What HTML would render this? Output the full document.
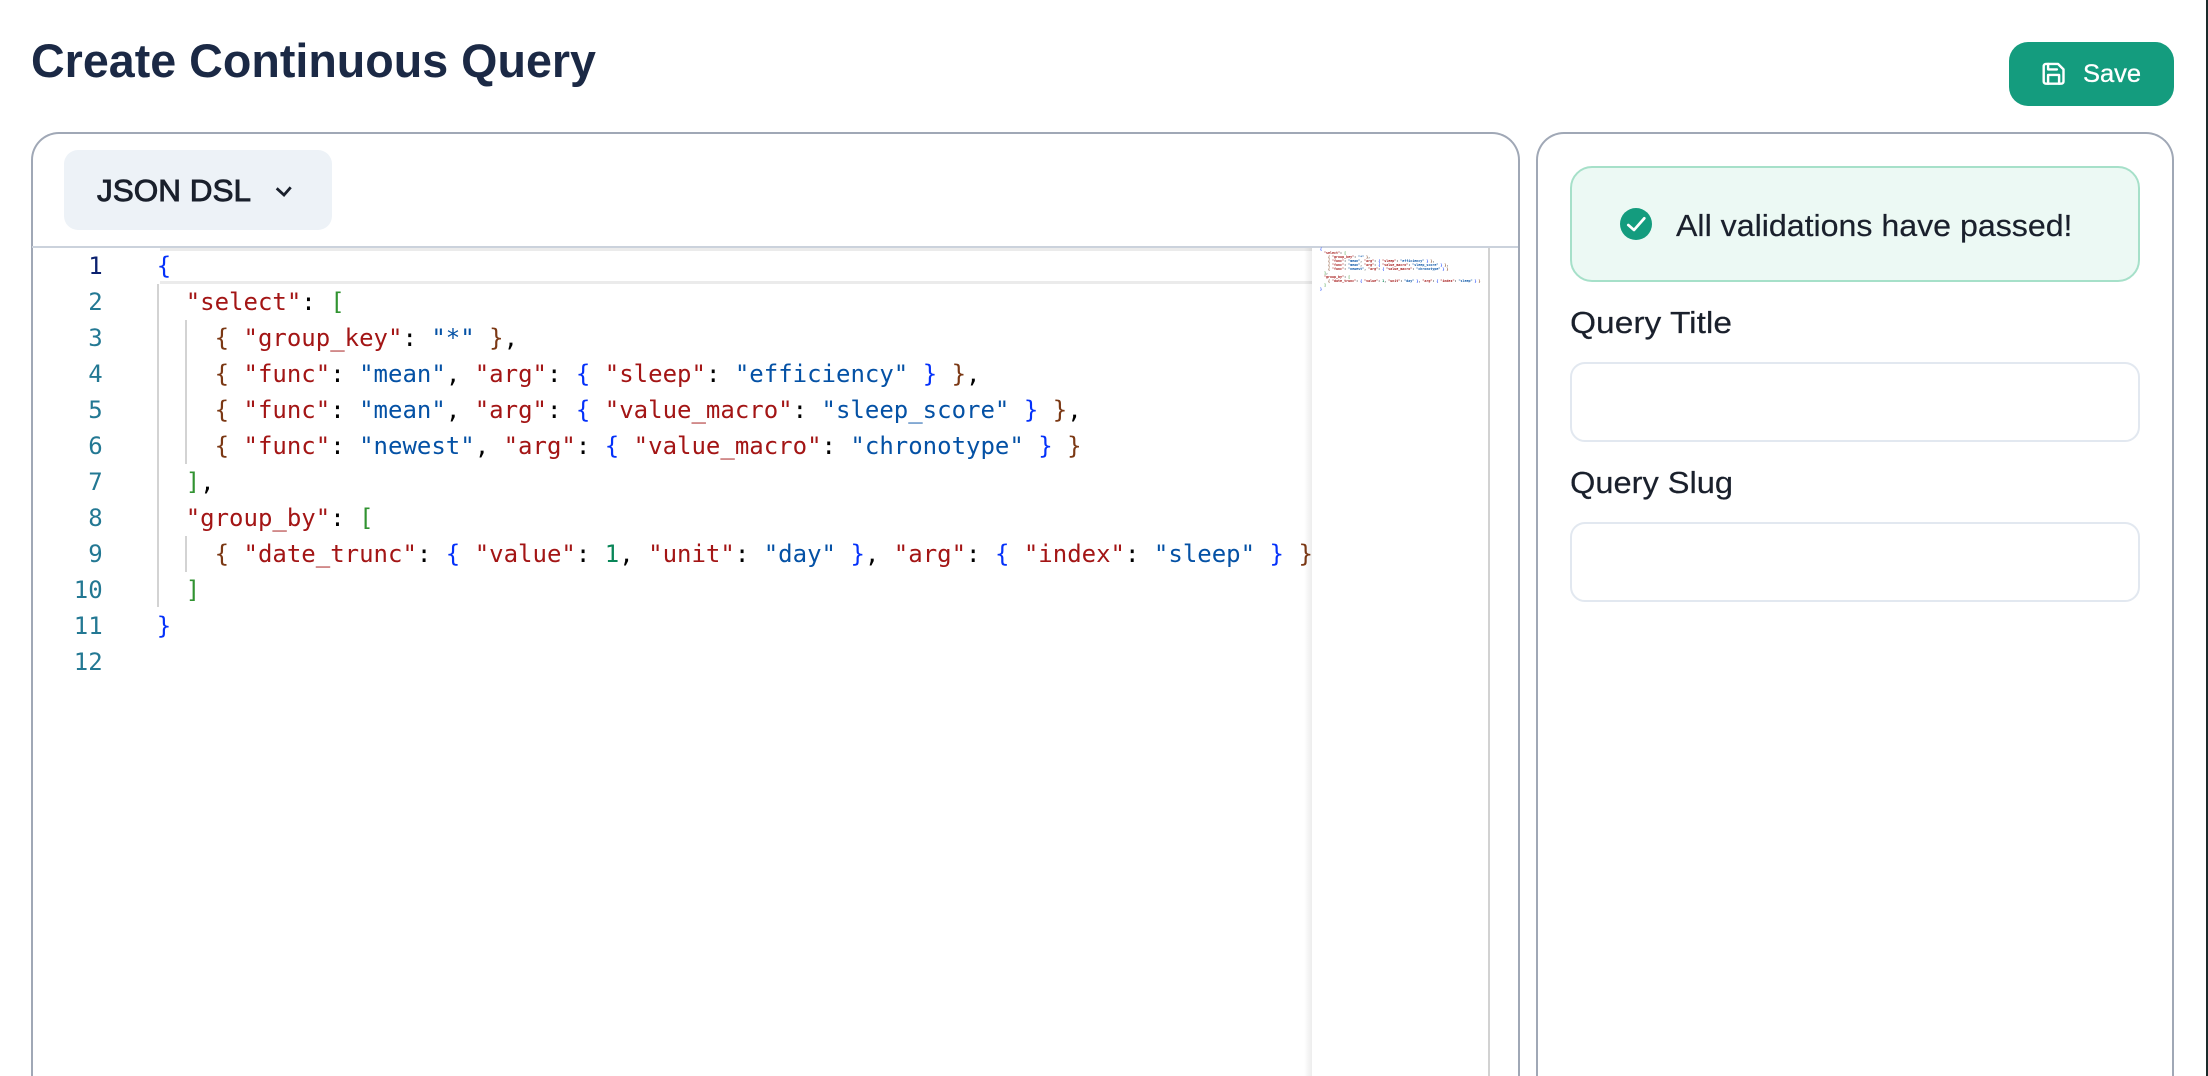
<!DOCTYPE html>
<html lang="en">
<head>
<meta charset="utf-8">
<title>Create Continuous Query</title>
<style>
html,body{margin:0;padding:0;width:2208px;height:1076px;overflow:hidden;background:#fff}
#page{position:relative;width:2208px;height:1076px;overflow:hidden;background:#fff}
.a{position:absolute;box-sizing:border-box}
svg.t{position:absolute;left:0;top:0;width:2208px;height:1076px}
svg.t text{font-family:"Liberation Sans",Arial,sans-serif}
pre{margin:0;position:absolute;font-family:"DejaVu Sans Mono","Liberation Mono",monospace;white-space:pre}
#code{left:156.8px;top:248px;font-size:24px;line-height:36px;color:#000;width:1156px;overflow:hidden}
#mini{left:1320px;top:248.2px;font-size:3.33px;line-height:3.93px;color:#000;font-weight:700}
#nums{left:40px;top:248px;width:62.7px;text-align:right;font-size:24px;line-height:36px;color:#237893}
.k{color:#a31515}.s{color:#0451a5}.n{color:#098658}
.b1{color:#0431fa}.b2{color:#319331}.b3{color:#7b3814}
.card{border:2px solid #a0a8b6;border-bottom:0;border-radius:28px 28px 0 0}
</style>
</head>
<body>
<div id="page">
<div class="a card" style="left:30.5px;top:132.3px;width:1489.5px;height:943.7px"></div>
<div class="a card" style="left:1536px;top:132.3px;width:638px;height:943.7px"></div>
<div class="a" style="left:64px;top:150px;width:268px;height:80px;background:#edf2f7;border-radius:14px"></div>
<div class="a" style="left:32px;top:246px;width:1486px;height:2.4px;background:#cbd2dc"></div>

<div class="a" style="left:159.5px;top:248px;width:1152.5px;height:36px;border-top:3.5px solid #ebebeb;border-bottom:3.5px solid #ebebeb"></div>

<div class="a" style="left:157px;top:284px;width:1.5px;height:323px;background:#d3d3d3"></div>
<div class="a" style="left:185.2px;top:320px;width:1.5px;height:144px;background:#d3d3d3"></div>
<div class="a" style="left:185.2px;top:536px;width:1.5px;height:36px;background:#d3d3d3"></div>

<pre id="nums"><span style="color:#0b216f">1</span>
2
3
4
5
6
7
8
9
10
11
12</pre>

<pre id="code"><span class="b1">{</span>
  <span class="k">"select"</span>: <span class="b2">[</span>
    <span class="b3">{</span> <span class="k">"group_key"</span>: <span class="s">"*"</span> <span class="b3">}</span>,
    <span class="b3">{</span> <span class="k">"func"</span>: <span class="s">"mean"</span>, <span class="k">"arg"</span>: <span class="b1">{</span> <span class="k">"sleep"</span>: <span class="s">"efficiency"</span> <span class="b1">}</span> <span class="b3">}</span>,
    <span class="b3">{</span> <span class="k">"func"</span>: <span class="s">"mean"</span>, <span class="k">"arg"</span>: <span class="b1">{</span> <span class="k">"value_macro"</span>: <span class="s">"sleep_score"</span> <span class="b1">}</span> <span class="b3">}</span>,
    <span class="b3">{</span> <span class="k">"func"</span>: <span class="s">"newest"</span>, <span class="k">"arg"</span>: <span class="b1">{</span> <span class="k">"value_macro"</span>: <span class="s">"chronotype"</span> <span class="b1">}</span> <span class="b3">}</span>
  <span class="b2">]</span>,
  <span class="k">"group_by"</span>: <span class="b2">[</span>
    <span class="b3">{</span> <span class="k">"date_trunc"</span>: <span class="b1">{</span> <span class="k">"value"</span>: <span class="n">1</span>, <span class="k">"unit"</span>: <span class="s">"day"</span> <span class="b1">}</span>, <span class="k">"arg"</span>: <span class="b1">{</span> <span class="k">"index"</span>: <span class="s">"sleep"</span> <span class="b1">}</span> <span class="b3">}</span>
  <span class="b2">]</span>
<span class="b1">}</span></pre>

<div class="a" style="left:1304px;top:248px;width:8px;height:828px;background:linear-gradient(to right,rgba(0,0,0,0),rgba(0,0,0,.075))"></div>
<div class="a" style="left:1312px;top:248px;width:176px;height:828px;background:#fff"></div>
<div class="a" style="left:1488px;top:248px;width:1.5px;height:828px;background:#d2d2d2"></div>

<pre id="mini"><span class="b1">{</span>
  <span class="k">"select"</span>: <span class="b2">[</span>
    <span class="b3">{</span> <span class="k">"group_key"</span>: <span class="s">"*"</span> <span class="b3">}</span>,
    <span class="b3">{</span> <span class="k">"func"</span>: <span class="s">"mean"</span>, <span class="k">"arg"</span>: <span class="b1">{</span> <span class="k">"sleep"</span>: <span class="s">"efficiency"</span> <span class="b1">}</span> <span class="b3">}</span>,
    <span class="b3">{</span> <span class="k">"func"</span>: <span class="s">"mean"</span>, <span class="k">"arg"</span>: <span class="b1">{</span> <span class="k">"value_macro"</span>: <span class="s">"sleep_score"</span> <span class="b1">}</span> <span class="b3">}</span>,
    <span class="b3">{</span> <span class="k">"func"</span>: <span class="s">"newest"</span>, <span class="k">"arg"</span>: <span class="b1">{</span> <span class="k">"value_macro"</span>: <span class="s">"chronotype"</span> <span class="b1">}</span> <span class="b3">}</span>
  <span class="b2">]</span>,
  <span class="k">"group_by"</span>: <span class="b2">[</span>
    <span class="b3">{</span> <span class="k">"date_trunc"</span>: <span class="b1">{</span> <span class="k">"value"</span>: <span class="n">1</span>, <span class="k">"unit"</span>: <span class="s">"day"</span> <span class="b1">}</span>, <span class="k">"arg"</span>: <span class="b1">{</span> <span class="k">"index"</span>: <span class="s">"sleep"</span> <span class="b1">}</span> <span class="b3">}</span>
  <span class="b2">]</span>
<span class="b1">}</span></pre>

<div class="a" style="left:2009px;top:42px;width:165px;height:64px;background:#149c7e;border-radius:19px"></div>
<div class="a" style="left:1570px;top:166px;width:570px;height:116px;background:#ecf9f4;border:2px solid #a6e0c9;border-radius:22px"></div>
<div class="a" style="left:1570px;top:362px;width:570px;height:80px;background:#fff;border:2px solid #e2e8f0;border-radius:15px"></div>
<div class="a" style="left:1570px;top:522px;width:570px;height:80px;background:#fff;border:2px solid #e2e8f0;border-radius:15px"></div>
<div class="a" style="left:2206px;top:0;width:2px;height:1076px;background:#1a2a2a"></div>

<svg class="t" viewBox="0 0 2208 1076" xmlns="http://www.w3.org/2000/svg">
  <text x="31" y="77" font-size="47" font-weight="700" fill="#1b2945" textLength="565" lengthAdjust="spacingAndGlyphs">Create Continuous Query</text>
  <text x="97" y="201" font-size="31" fill="#1a202c" stroke="#1a202c" stroke-width=".9" textLength="154" lengthAdjust="spacingAndGlyphs">JSON DSL</text>
  <path d="M276.7 188.3L284 195L290.7 187.3" fill="none" stroke="#1a202c" stroke-width="2.8"/>
  <text x="2083" y="82" font-size="25" fill="#fff" stroke="#fff" stroke-width=".3" textLength="58" lengthAdjust="spacingAndGlyphs">Save</text>
  <g transform="translate(2040.4 60.6) scale(1.1)" fill="none" stroke="#fff" stroke-width="2.2" stroke-linecap="round" stroke-linejoin="round">
    <path d="M19 21H5a2 2 0 0 1-2-2V5a2 2 0 0 1 2-2h11l5 5v11a2 2 0 0 1-2 2z"/>
    <path d="M17 21V13H7v8"/>
    <path d="M7 3v5h8"/>
  </g>
  <circle cx="1636" cy="224" r="16" fill="#149c7e"/>
  <path d="M1628.3 225L1634 230L1644.3 218.3" fill="none" stroke="#fff" stroke-width="2.7" stroke-linecap="round" stroke-linejoin="round"/>
  <text x="1676" y="236" font-size="31" fill="#1a202c" stroke="#1a202c" stroke-width=".2" textLength="396.5" lengthAdjust="spacingAndGlyphs">All validations have passed!</text>
  <text x="1570" y="333" font-size="31" fill="#1a202c" stroke="#1a202c" stroke-width=".2" textLength="162" lengthAdjust="spacingAndGlyphs">Query Title</text>
  <text x="1570" y="493" font-size="31" fill="#1a202c" stroke="#1a202c" stroke-width=".2" textLength="163" lengthAdjust="spacingAndGlyphs">Query Slug</text>
</svg>
</div>
</body>
</html>
